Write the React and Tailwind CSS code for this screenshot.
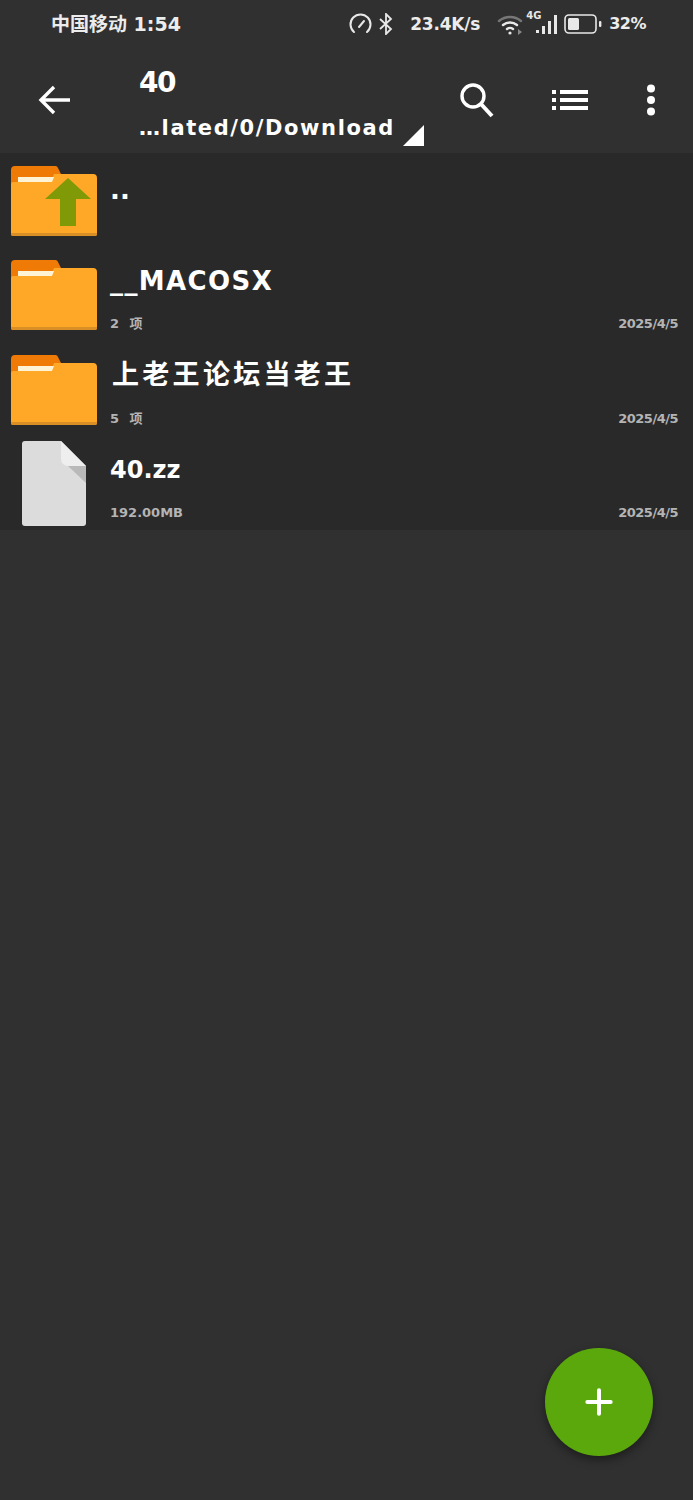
import { Plus } from 'lucide-react'

const FolderIcon = ({ up }) => (
  <svg width="86" height="70" viewBox="0 0 86 70" className="block">
    <path d="M0 4a4 4 0 0 1 4-4h40a3 3 0 0 1 3 2l3 6v20H0z" fill="#ef7a06" />
    <path d="M0 18a2 2 0 0 1 2-2h38l3-8h39a4 4 0 0 1 4 4v56a2 2 0 0 1-2 2H2a2 2 0 0 1-2-2z" fill="#ffa726" />
    <path d="M7 11h36l-2 5H7z" fill="#fff3d6" />
    <path d="M0 67h86v1a2 2 0 0 1-2 2H2a2 2 0 0 1-2-2z" fill="#d98f26" />
    {up && <path d="M57 12l23 21H65v27H49V33H34z" fill="#7f9a06" />}
  </svg>
)

const FileIcon = () => (
  <svg width="64" height="85" viewBox="0 0 64 85" className="block">
    <path d="M3 0h36l25 25v57a3 3 0 0 1-3 3H3a3 3 0 0 1-3-3V3a3 3 0 0 1 3-3z" fill="#dcdcdc" />
    <path d="M39 0l25 25H46a7 7 0 0 1-7-7z" fill="#eeeeee" />
    <path d="M46 25h18v17z" fill="#b9b9b9" />
  </svg>
)

const rows = [
  { name: '..', icon: 'up', nameClass: 'top-[20px] text-[26px]' },
  { name: '__MACOSX', icon: 'folder', meta: '2 项', date: '2025/4/5', nameClass: 'top-[17px] text-[26px] tracking-[1.4px]', metaClass: 'tracking-[3px]' },
  { name: '上老王论坛当老王', icon: 'folder', meta: '5 项', date: '2025/4/5', nameClass: 'top-[16px] left-[2px] text-[27px] tracking-[3.3px]', metaClass: 'tracking-[3px]' },
  { name: '40.zz', icon: 'file', meta: '192.00MB', date: '2025/4/5', nameClass: 'top-[17px] text-[24px]' },
]

function StatusBar() {
  return (
    <div className="h-12 flex items-center pl-[51px] pr-[47px] text-[#ececec] text-[19px] font-bold leading-none">
      <span className="tracking-[0px]">中国移动 1:54</span>
      <div className="ml-auto flex items-center">
        <svg width="24" height="22" viewBox="0 0 24 22" fill="none" stroke="#e8e8e8" strokeWidth="2" strokeLinecap="round">
          <path d="M6 19a10 10 0 1 1 13 0" />
          <path d="M11 14l5-6" />
        </svg>
        <svg width="18" height="22" viewBox="0 0 18 22" fill="none" stroke="#e8e8e8" strokeWidth="1.8" className="ml-[5px]">
          <path d="M3 6l11 10-5 5V1l5 5L3 16" />
        </svg>
        <span className="ml-[15px] text-[17px] tracking-[-0.2px]">23.4K/s</span>
        <svg width="28" height="22" viewBox="0 0 28 22" fill="none" strokeLinecap="round" className="ml-[17px]">
          <path d="M2 8a17 17 0 0 1 22 0" stroke="#777" strokeWidth="2.4" />
          <path d="M6 12a11 11 0 0 1 14 0" stroke="#e8e8e8" strokeWidth="2.4" />
          <path d="M10 16a5 5 0 0 1 6 0" stroke="#e8e8e8" strokeWidth="2.4" />
          <circle cx="13" cy="20" r="1.6" fill="#e8e8e8" />
          <path d="M21 16l4 3-4 3z" fill="#888" />
        </svg>
        <div className="relative w-[36px] h-[22px] ml-[1px]">
          <span className="absolute left-0 top-[-2px] text-[10px] text-[#e8e8e8]">4G</span>
          <svg width="36" height="22" viewBox="0 0 36 22" fill="#e8e8e8" className="absolute left-0 top-0">
            <rect x="10" y="17" width="3" height="3" />
            <rect x="16" y="13" width="3" height="8" />
            <rect x="22" y="8" width="3" height="13" />
            <rect x="28" y="2" width="3" height="19" />
          </svg>
        </div>
        <svg width="38" height="22" viewBox="0 0 38 22" fill="none" className="ml-[2px]">
          <rect x="1" y="2" width="31" height="18" rx="4" stroke="#e8e8e8" strokeWidth="1.6" />
          <rect x="4" y="5" width="11" height="12" rx="1.5" fill="#e8e8e8" />
          <rect x="35" y="8" width="2.4" height="6" rx="1" fill="#e8e8e8" />
        </svg>
        <span className="ml-[7px] text-[16px] tracking-[-0.5px]">32%</span>
      </div>
    </div>
  )
}

function Toolbar() {
  return (
    <div className="h-[105px] flex text-white">
      <div className="w-[139px] pl-[38px] flex items-center pb-[2px]">
        <svg width="32" height="32" viewBox="0 0 32 32" fill="none" stroke="#fff" strokeWidth="3.4">
          <path d="M32 16H3M16 3L3 16l13 13" />
        </svg>
      </div>
      <div className="w-[285px] relative">
        <div className="absolute left-0 top-[18px] text-[28px] font-bold leading-[34px] tracking-[-1.5px]">40</div>
        <div className="absolute left-0 top-[66px] text-[21px] font-bold leading-[28px] tracking-[1.6px] whitespace-nowrap">
          …lated/0/Download
        </div>
        <svg width="22" height="22" viewBox="0 0 22 22" className="absolute left-[264px] top-[77px]">
          <path d="M21 0v21H0z" fill="#fff" />
        </svg>
      </div>
      <div className="flex-1 relative">
        <svg width="36" height="36" viewBox="0 0 36 36" fill="none" stroke="#fff" className="absolute left-[35px] top-[35px]">
          <circle cx="14" cy="13" r="11" strokeWidth="3.4" />
          <path d="M22 21l11 12" strokeWidth="4" />
        </svg>
        <svg width="36" height="22" viewBox="0 0 36 22" fill="#fff" className="absolute left-[128px] top-[41px]">
          <rect x="0" y="1" width="4" height="4" />
          <rect x="8" y="1" width="28" height="4" />
          <rect x="0" y="9" width="4" height="4" />
          <rect x="8" y="9" width="28" height="4" />
          <rect x="0" y="17" width="4" height="4" />
          <rect x="8" y="17" width="28" height="4" />
        </svg>
        <svg width="10" height="32" viewBox="0 0 10 32" fill="#fff" className="absolute left-[222px] top-[36px]">
          <circle cx="5" cy="4.5" r="4" />
          <circle cx="5" cy="16" r="4" />
          <circle cx="5" cy="27.5" r="4" />
        </svg>
      </div>
    </div>
  )
}

function Row({ row }) {
  return (
    <div className="h-[94.3px] flex">
      <div className="w-[110px] shrink-0">
        {row.icon === 'file' ? (
          <div className="pl-[22px] pt-[5px]">
            <FileIcon />
          </div>
        ) : (
          <div className="pl-[11px] pt-[13px]">
            <FolderIcon up={row.icon === 'up'} />
          </div>
        )}
      </div>
      <div className="flex-1 relative">
        <div className={`absolute left-0 text-white font-bold leading-[34px] whitespace-nowrap ${row.nameClass}`}>
          {row.name}
        </div>
        {row.meta && (
          <div className="absolute left-0 right-[15px] top-[67px] flex justify-between text-[#b4b4b4] text-[13px] font-bold leading-5">
            <span className={row.metaClass}>{row.meta}</span>
            <span className="tracking-[-0.5px]">{row.date}</span>
          </div>
        )}
      </div>
    </div>
  )
}

export default function App() {
  return (
    <div className='relative w-[693px] h-[1500px] bg-[#303030] overflow-hidden font-["DejaVu_Sans","Noto_Sans_CJK_SC",sans-serif]'>
      <StatusBar />
      <Toolbar />
      <div className="bg-[#292929]">
        {rows.map((row) => (
          <Row key={row.name} row={row} />
        ))}
      </div>
      <button className="absolute left-[545px] top-[1348px] w-[108px] h-[108px] rounded-full bg-[#5ba80d] shadow-[0_4px_10px_rgba(0,0,0,0.4)] flex items-center justify-center">
        <Plus size={40} color="#fff" strokeWidth={4} absoluteStrokeWidth />
      </button>
    </div>
  )
}
